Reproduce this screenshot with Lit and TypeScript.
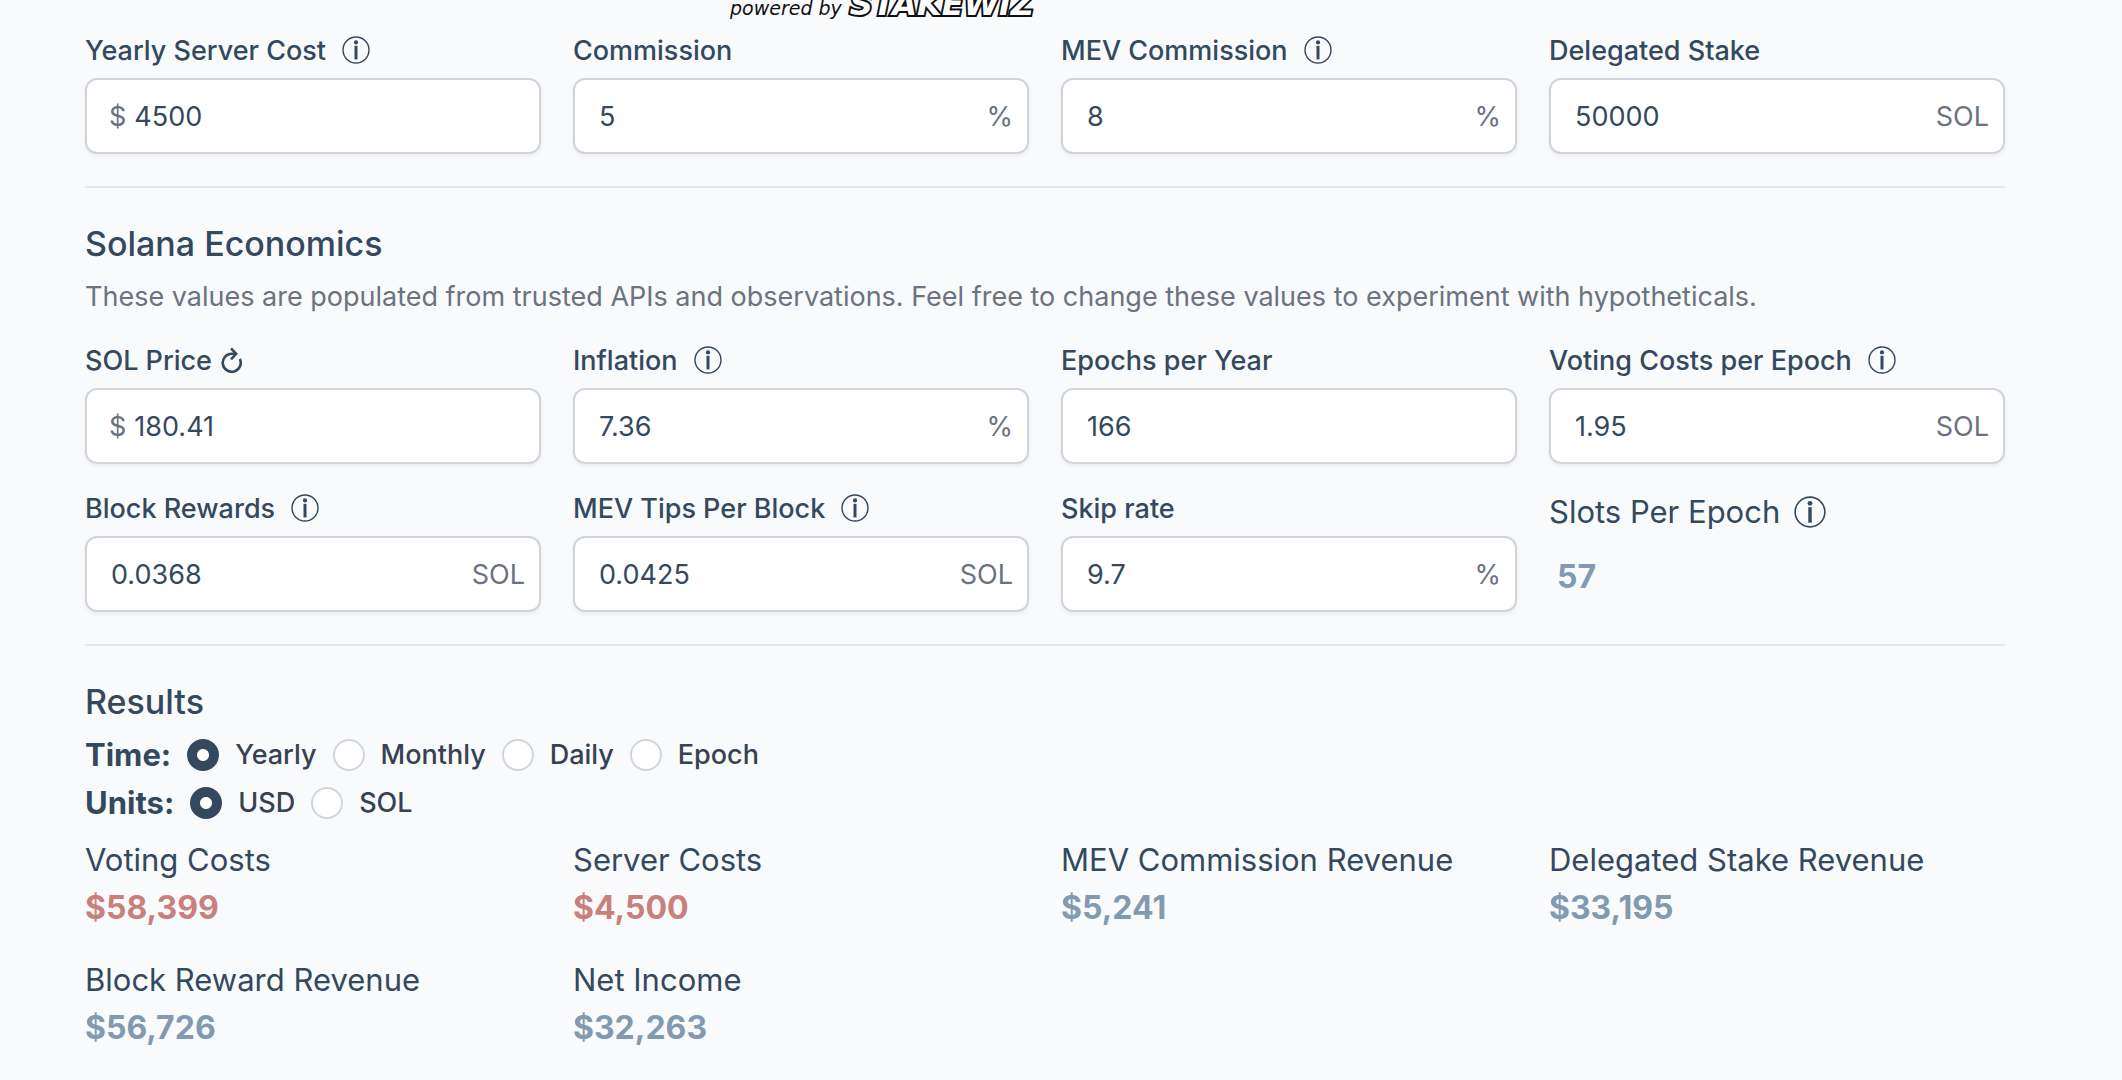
import { LitElement, css, html, nothing, svg } from "lit";
import { customElement, property } from "lit/decorators.js";

interface Field {
  id: string;
  label: string;
  value: string;
  prefix?: string;
  suffix?: string;
  info?: string;
  refresh?: boolean;
}

interface Result {
  label: string;
  value: string;
  cost?: boolean;
}

const VALIDATOR_FIELDS: Field[] = [
  { id: "server-cost", label: "Yearly Server Cost", value: "4500", prefix: "$", info: "About yearly server cost" },
  { id: "commission", label: "Commission", value: "5", suffix: "%" },
  { id: "mev-commission", label: "MEV Commission", value: "8", suffix: "%", info: "About MEV commission" },
  { id: "stake", label: "Delegated Stake", value: "50000", suffix: "SOL" },
];

const ECONOMICS_FIELDS: Field[] = [
  { id: "sol-price", label: "SOL Price", value: "180.41", prefix: "$", refresh: true },
  { id: "inflation", label: "Inflation", value: "7.36", suffix: "%", info: "About inflation" },
  { id: "epochs", label: "Epochs per Year", value: "166" },
  { id: "voting-costs", label: "Voting Costs per Epoch", value: "1.95", suffix: "SOL", info: "About voting costs" },
  { id: "block-rewards", label: "Block Rewards", value: "0.0368", suffix: "SOL", info: "About block rewards" },
  { id: "mev-tips", label: "MEV Tips Per Block", value: "0.0425", suffix: "SOL", info: "About MEV tips" },
  { id: "skip-rate", label: "Skip rate", value: "9.7", suffix: "%" },
];

const RESULTS: Result[] = [
  { label: "Voting Costs", value: "$58,399", cost: true },
  { label: "Server Costs", value: "$4,500", cost: true },
  { label: "MEV Commission Revenue", value: "$5,241" },
  { label: "Delegated Stake Revenue", value: "$33,195" },
  { label: "Block Reward Revenue", value: "$56,726" },
  { label: "Net Income", value: "$32,263" },
];

const infoShape = svg`
  <circle cx="14" cy="14" r="13" fill="none" stroke="currentColor" stroke-width="1.4"></circle>
  <circle cx="14" cy="6.4" r="2.1" fill="currentColor"></circle>
  <path d="M14 9.8V23.4" stroke="currentColor" stroke-width="3"></path>`;

const infoIcon = (title: string) => html`
  <svg class="info" viewBox="0 0 28 28" role="img" aria-label=${title}>${infoShape}</svg>
`;

@customElement("labeled-field")
export class LabeledField extends LitElement {
  static styles = css`
    :host {
      display: block;
      min-width: 0;
    }
    .head {
      display: flex;
      align-items: center;
      height: 40px;
      box-sizing: border-box;
      padding-top: 2px;
      font-weight: 500;
    }
    .info {
      width: 28px;
      height: 28px;
      margin: 0 0 2px 16px;
    }
    .refresh {
      display: flex;
      margin: 0 0 2px 8px;
      padding: 0;
      border: 0;
      background: none;
      color: inherit;
      cursor: pointer;
    }
    .refresh svg {
      width: 22px;
      height: 26px;
    }
    .box {
      display: flex;
      align-items: center;
      height: 76px;
      box-sizing: border-box;
      margin-top: 8px;
      padding: 2px 14px 0 24px;
      border: 2px solid #d1d5db;
      border-radius: 12px;
      background: #fff;
      box-shadow: 0 2px 4px rgba(0, 0, 0, 0.06);
    }
    .box:focus-within {
      border-color: #829ab1;
    }
    .affix {
      color: #6b7280;
    }
    .prefix {
      margin: 0 8px 0 -2px;
    }
    input {
      flex: 1;
      min-width: 0;
      padding: 0;
      border: 0;
      outline: 0;
      background: none;
      color: inherit;
      font: inherit;
    }
  `;

  @property({ attribute: false }) field!: Field;

  render() {
    const f = this.field;
    return html`
      <div class="head">
        <label for=${f.id}>${f.label}</label>
        ${f.info ? infoIcon(f.info) : nothing}
        ${f.refresh
          ? html`<button class="refresh" type="button" aria-label="Refresh price">
              <svg viewBox="0 0 22 26" fill="none" stroke="currentColor" stroke-width="2.6" aria-hidden="true">
                <path d="M19.8 11.8A9 9 0 1 1 11.6 6.8H15.6"></path>
                <path d="M11 1.4L16.2 6.8L11 12.4" stroke-linejoin="miter"></path>
              </svg>
            </button>`
          : nothing}
      </div>
      <div class="box">
        ${f.prefix ? html`<span class="affix prefix">${f.prefix}</span>` : nothing}
        <input id=${f.id} type="text" inputmode="decimal" .value=${f.value} />
        ${f.suffix ? html`<span class="affix">${f.suffix}</span>` : nothing}
      </div>
    `;
  }
}

@customElement("choice-row")
export class ChoiceRow extends LitElement {
  static styles = css`
    :host {
      display: block;
    }
    .row {
      display: flex;
      align-items: center;
      gap: 16px;
      height: 48px;
    }
    .title {
      font-size: 31px;
      font-weight: 700;
    }
    .option {
      display: flex;
      align-items: center;
      gap: 16px;
      color: #374151;
      font-weight: 500;
    }
    input {
      appearance: none;
      width: 32px;
      height: 32px;
      margin: 0;
      border: 2px solid #d1d5db;
      border-radius: 50%;
      background: #fff;
    }
    input:checked {
      border-color: #34495e;
      background: radial-gradient(circle, #fff 5.5px, #34495e 6.5px);
    }
  `;

  @property() name = "";
  @property() heading = "";
  @property({ attribute: false }) options: string[] = [];

  render() {
    return html`
      <div class="row" role="radiogroup" aria-labelledby="title">
        <span class="title" id="title">${this.heading}:</span>
        ${this.options.map(
          (option, i) => html`
            <label class="option">
              <input type="radio" name=${this.name} .value=${option} ?checked=${i === 0} />
              ${option}
            </label>
          `,
        )}
      </div>
    `;
  }
}

@customElement("app-root")
export class AppRoot extends LitElement {
  static styles = css`
    :host {
      display: block;
      min-height: 100vh;
      box-sizing: border-box;
      padding: 0 117px 24px 85px;
      background: #f9fafc;
      color: #34495e;
      font: 400 27px/40px Inter, "Liberation Sans", sans-serif;
    }
    .brand {
      display: flex;
      align-items: flex-end;
      gap: 8px;
      height: 30px;
      padding-left: 645px;
      overflow: hidden;
      color: #111;
      font-family: "DejaVu Sans", sans-serif;
      font-style: italic;
    }
    .powered {
      padding-bottom: 14px;
      font-size: 19px;
      line-height: 16px;
    }
    .wordmark {
      padding-bottom: 8px;
      color: #fff;
      font-size: 32px;
      font-weight: 700;
      line-height: 36px;
      -webkit-text-stroke: 4px #111;
      paint-order: stroke fill;
    }
    .grid {
      display: grid;
      grid-template-columns: repeat(4, minmax(0, 1fr));
      gap: 24px 32px;
    }
    .section {
      margin-top: 32px;
      padding-top: 32px;
      border-top: 2px solid #e5e7eb;
    }
    h2 {
      margin: 0;
      font-size: 34px;
      font-weight: 500;
      line-height: 48px;
    }
    .intro {
      margin: 9px 0 23px;
      color: #6b7280;
    }
    .choices {
      margin: 5px 0 9px;
    }
    .stat {
      font-size: 31px;
      line-height: 48px;
    }
    .name {
      display: flex;
      align-items: center;
    }
    .info {
      width: 32px;
      height: 32px;
      margin-left: 14px;
    }
    .value {
      color: #829ab1;
      font-size: 32px;
      font-weight: 700;
    }
    .cost {
      color: #c97f7b;
    }
    .slots {
      margin-top: 17px;
      padding-left: 8px;
    }
  `;

  render() {
    return html`
      <div class="brand">
        <span class="powered">powered by</span>
        <span class="wordmark">STAKEWIZ</span>
      </div>
      <main>
        <div class="grid">
          ${VALIDATOR_FIELDS.map((f) => html`<labeled-field .field=${f}></labeled-field>`)}
        </div>
        <section class="section">
          <h2>Solana Economics</h2>
          <p class="intro">
            These values are populated from trusted APIs and observations. Feel free to change these values to
            experiment with hypotheticals.
          </p>
          <div class="grid">
            ${ECONOMICS_FIELDS.map((f) => html`<labeled-field .field=${f}></labeled-field>`)}
            <div class="stat">
              <div class="name">Slots Per Epoch ${infoIcon("About slots per epoch")}</div>
              <div class="value slots">57</div>
            </div>
          </div>
        </section>
        <section class="section">
          <h2>Results</h2>
          <div class="choices">
            <choice-row name="time" heading="Time" .options=${["Yearly", "Monthly", "Daily", "Epoch"]}></choice-row>
            <choice-row name="units" heading="Units" .options=${["USD", "SOL"]}></choice-row>
          </div>
          <div class="grid">
            ${RESULTS.map(
              (r) => html`
                <div class="stat">
                  <div>${r.label}</div>
                  <div class="value ${r.cost ? "cost" : ""}">${r.value}</div>
                </div>
              `,
            )}
          </div>
        </section>
      </main>
    `;
  }
}
